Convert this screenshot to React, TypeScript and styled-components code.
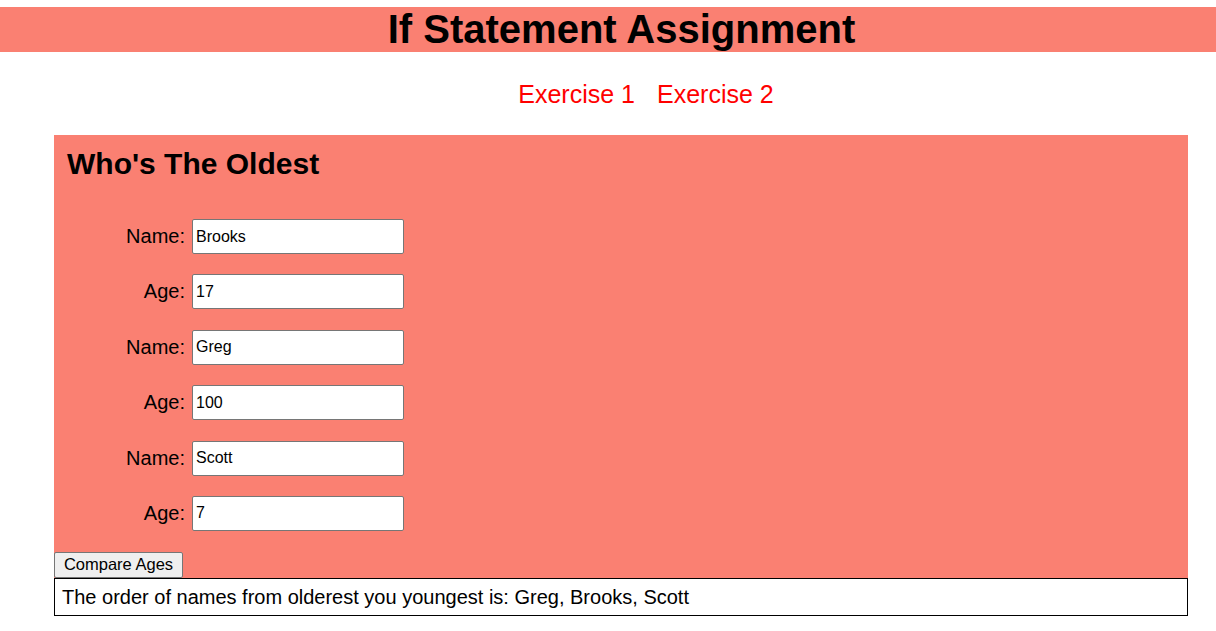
import React from "react";
import styled, { createGlobalStyle } from "styled-components";

const Global = createGlobalStyle`
  html, body { margin: 0; padding: 0; background: #ffffff; }
  body { font-family: "Liberation Sans", Arial, sans-serif; color: #000; }
`;

const Page = styled.div`
  padding-top: 7px;
`;

const Header = styled.h1`
  margin: 0;
  background: #fa8072;
  font-size: 40px;
  font-weight: bold;
  line-height: 45px;
  height: 45px;
  text-align: center;
  padding-left: 27px;
`;

const Nav = styled.nav`
  display: flex;
  justify-content: center;
  gap: 22px;
  padding-left: 76px;
  margin-top: 28px;
  height: 28px;
  line-height: 28px;
`;

const NavLink = styled.a`
  color: #ff0000;
  font-size: 25px;
  text-decoration: none;
`;

const Main = styled.main`
  margin: 27px 28px 0 54px;
`;

const Panel = styled.section`
  background: #fa8072;
  padding-top: 11px;
`;

const Title = styled.h2`
  margin: 0 0 38px 13px;
  font-size: 30px;
  font-weight: bold;
  line-height: 35px;
`;

const Form = styled.div`
  display: flex;
  flex-direction: column;
  gap: 20.4px;
`;

const Row = styled.div`
  display: flex;
  align-items: center;
`;

const Label = styled.label`
  width: 131px;
  margin-right: 7px;
  text-align: right;
  font-size: 20px;
`;

const Input = styled.input`
  box-sizing: border-box;
  width: 212px;
  height: 35px;
  border: 1px solid #767676;
  border-radius: 2px;
  padding: 0 3px;
  font-family: "Liberation Sans", Arial, sans-serif;
  font-size: 16px;
  color: #000;
  background: #fff;
`;

const Button = styled.button`
  margin-top: 21px;
  display: block;
  box-sizing: border-box;
  width: 129px;
  height: 26px;
  padding: 0;
  background: #efefef;
  border: 1px solid #767676;
  border-radius: 2px;
  font-family: "Liberation Sans", Arial, sans-serif;
  font-size: 16.5px;
  color: #000;
`;

const Result = styled.div`
  border: 1px solid #000;
  padding: 7px 7px 6px;
  font-size: 20px;
  line-height: 23px;
  background: #fff;
`;

const people = [
  { label: "Name:", value: "Brooks" },
  { label: "Age:", value: "17" },
  { label: "Name:", value: "Greg" },
  { label: "Age:", value: "100" },
  { label: "Name:", value: "Scott" },
  { label: "Age:", value: "7" },
];

export default function App() {
  return (
    <>
      <Global />
      <Page>
        <Header>If Statement Assignment</Header>
        <Nav>
          <NavLink href="#">Exercise 1</NavLink>
          <NavLink href="#">Exercise 2</NavLink>
        </Nav>
        <Main>
          <Panel>
            <Title>Who's The Oldest</Title>
            <Form>
              {people.map((p, i) => (
                <Row key={i}>
                  <Label>{p.label}</Label>
                  <Input defaultValue={p.value} />
                </Row>
              ))}
            </Form>
            <Button>Compare Ages</Button>
          </Panel>
          <Result>The order of names from olderest you youngest is: Greg, Brooks, Scott</Result>
        </Main>
      </Page>
    </>
  );
}
